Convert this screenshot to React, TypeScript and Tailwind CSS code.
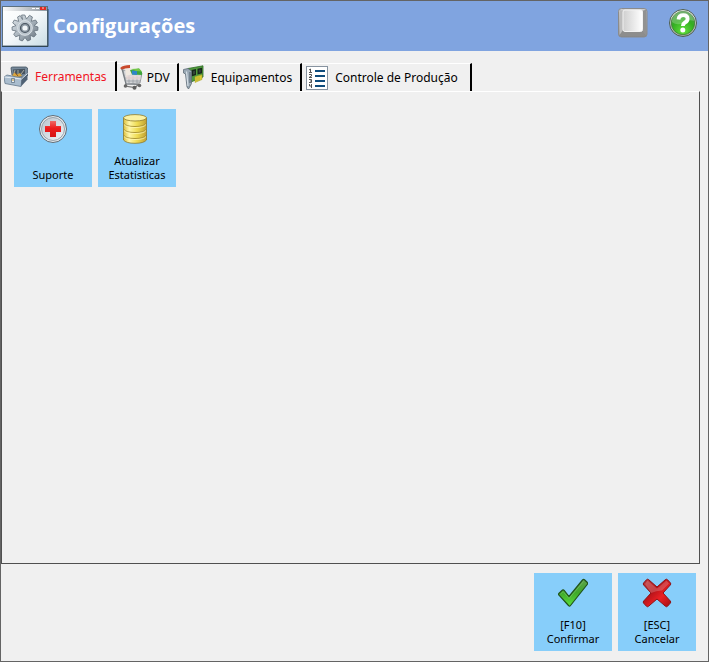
import { useState } from 'react'
import type { ReactNode } from 'react'

function WindowGearIcon() {
  return (
    <svg width="47" height="41" viewBox="0 0 47 41" aria-hidden="true">
      <defs>
        <linearGradient id="winBg" x1="0" y1="0" x2="1" y2="1">
          <stop offset="0" stopColor="#ffffff" />
          <stop offset="0.5" stopColor="#f4f8fa" />
          <stop offset="1" stopColor="#c9dce4" />
        </linearGradient>
        <linearGradient id="winBar" x1="0" y1="0" x2="1" y2="0">
          <stop offset="0" stopColor="#fafafa" />
          <stop offset="1" stopColor="#8d979f" />
        </linearGradient>
        <linearGradient id="gearFill" x1="0" y1="0" x2="1" y2="1">
          <stop offset="0" stopColor="#e2e8ec" />
          <stop offset="0.5" stopColor="#a9b4bd" />
          <stop offset="1" stopColor="#66727d" />
        </linearGradient>
      </defs>
      <rect x="0.5" y="0.5" width="45" height="39.5" fill="url(#winBg)" stroke="#5c6f7d" />
      <path d="M0 40.5h46V3" fill="none" stroke="#2f4655" />
      <rect x="1" y="1" width="44" height="4" fill="url(#winBar)" />
      <rect x="30" y="2" width="3" height="1" fill="#fff" />
      <rect x="34" y="2" width="3" height="1" fill="#fff" />
      <rect x="38" y="1" width="6" height="3" fill="#e02a22" />
      <path d="M40 2h2" stroke="#fff" strokeWidth="0.8" />
      <g transform="translate(23 22)">
        <path
          d="M-2.5-8.5-3.4-13H-.2L1.5-9 4.5-12.7 7.4-11 6.3-6.7 10.6-8 12.4-5.1 9-2.4 13-1 12.8 2.3 8.8 3 11.2 6.5 8.9 9 5.2 7.2 5.6 11.7 2.6 13 0 9.5-2.7 13-5.7 11.7-5.2 7.2-9.3 8.8-11.3 6.2-8.7 3-12.8 2.2-13-1-9-2.4-12.3-5.1-10.7-8-6.3-6.6-7.4-11-4.8-12.4Z"
          fill="url(#gearFill)"
          stroke="#65717c"
          strokeWidth="0.8"
        />
        <circle r="7.3" fill="#b9c3cb" stroke="#dce3e8" strokeWidth="1" />
        <circle r="4.5" fill="#8a96a1" stroke="#4b5660" strokeWidth="1.2" />
        <circle r="2.6" fill="#f2f6f8" />
      </g>
    </svg>
  )
}

function KeyIcon() {
  return (
    <svg width="30" height="30" viewBox="0 0 30 30" aria-hidden="true">
      <defs>
        <linearGradient id="keyTop" x1="0" y1="0" x2="1" y2="0">
          <stop offset="0" stopColor="#cfcfcf" />
          <stop offset="0.6" stopColor="#ececec" />
          <stop offset="1" stopColor="#ffffff" />
        </linearGradient>
        <linearGradient id="keySide" x1="0" y1="0" x2="0" y2="1">
          <stop offset="0" stopColor="#d0d0d0" />
          <stop offset="1" stopColor="#858585" />
        </linearGradient>
      </defs>
      <rect x="0.5" y="0.5" width="28.5" height="28.5" rx="3" fill="url(#keySide)" stroke="#8b8b8b" />
      <path d="M24 3 28.5 1.5V28L24 23Z" fill="#929292" />
      <path d="M4 23h20l4 5H2Z" fill="#8d8d8d" />
      <path d="M1.5 2 5 3V22L1.5 27Z" fill="#bdbdbd" />
      <rect x="5" y="2" width="19.5" height="21.5" rx="2" fill="url(#keyTop)" stroke="#f2f2f2" />
    </svg>
  )
}

function HelpIcon() {
  return (
    <svg width="30" height="30" viewBox="0 0 30 30" aria-hidden="true">
      <defs>
        <linearGradient id="helpRing" x1="0" y1="0" x2="0" y2="1">
          <stop offset="0" stopColor="#e4e9e4" />
          <stop offset="1" stopColor="#a4ada4" />
        </linearGradient>
        <radialGradient id="helpFill" cx="0.5" cy="0.85" r="0.8">
          <stop offset="0" stopColor="#62e13b" />
          <stop offset="0.6" stopColor="#34ae22" />
          <stop offset="1" stopColor="#4b9c45" />
        </radialGradient>
      </defs>
      <circle cx="15" cy="15" r="13.5" fill="url(#helpRing)" stroke="#4c5d50" strokeWidth="1" />
      <circle cx="15" cy="15" r="11.7" fill="url(#helpFill)" stroke="#3d7d35" strokeWidth="0.8" />
      <path d="M4 14a11 11 0 0 1 22-1Q20 11 15 15 9 18 4 14Z" fill="#fff" opacity="0.22" />
      <path d="M10.5 11.5Q11 7.2 15.3 7.2 19.6 7.2 19.6 10.8 19.6 13.2 17 14.5 15 15.6 14.9 18" fill="none" stroke="#fff" strokeWidth="3.8" />
      <circle cx="14.8" cy="22" r="2.5" fill="#fff" />
    </svg>
  )
}

function ToolboxIcon() {
  return (
    <svg width="24" height="22" viewBox="0 0 24 22" aria-hidden="true">
      <path d="M7 2Q7 1 8.5 1L22 1Q24 1.5 24 4V9L21 12 8 9Z" fill="#77899a" stroke="#40505f" strokeWidth="0.8" />
      <path d="M9 3.5 21 2.7V8L10 9Z" fill="#47545f" />
      <path d="M10 8 11 4M14 8V4M17 8 20 4" stroke="#a8a9a2" strokeWidth="1" />
      <path d="M8 9.5 10.5 6.5l2.5 2 3-1.5 2 3-8 1.5Z" fill="#d9a640" />
      <path d="M11 6.5 14 10" stroke="#8d581f" strokeWidth="1" />
      <path d="M0 11 3 9 18 12 17 20.5 1 17.5Z" fill="#aabdce" stroke="#65798c" strokeWidth="0.8" />
      <path d="M17.5 12.5 23.5 7.5V13.5L17 20.5Z" fill="#4f6174" />
      <path d="M0.5 11 17.5 13 23.5 7.5" fill="none" stroke="#e2ebf2" strokeWidth="1" />
      <path d="M7.5 12.5h3v4h-3Z" fill="#e9eff4" stroke="#536778" strokeWidth="0.7" />
      <path d="M9 13v2" stroke="#c49033" />
    </svg>
  )
}

function CartIcon() {
  return (
    <svg width="23" height="25" viewBox="0 0 23 25" aria-hidden="true">
      <path d="M3 5 22 8 20 18 6 19Z" fill="#d3d5d8" stroke="#85898e" strokeWidth="0.8" />
      <path d="M5 4 11 3l2 6-7 2Z" fill="#efe8df" />
      <path d="M10 5 19 3.5 22 7V10L12 9.5Z" fill="#3fa53b" />
      <path d="M12 5.5 17 6V10L12 9.5Z" fill="#2e86c8" />
      <path d="M11 4 19 3.5 22 6.5 16 6Z" fill="#74c648" />
      <path d="M1 4Q4 1.5 10 1.5" fill="none" stroke="#c9492c" strokeWidth="2.8" />
      <path d="M2 4 6 19 19 19.5" fill="none" stroke="#777d82" strokeWidth="1.2" />
      <path d="M5 13 20 13M5.5 16 20 16M9 11V19M13 11V19M17 11V19" stroke="#94989d" strokeWidth="0.7" />
      <path d="M5.5 10.5h15v4h-14Z" fill="#f0dcd9" opacity="0.7" />
      <path d="M6 19 5 21 15 22.5 19 19" fill="none" stroke="#777" strokeWidth="1.2" />
      <circle cx="5.5" cy="21" r="1.8" fill="#666" />
      <circle cx="14.5" cy="22.8" r="2" fill="#5d5d5d" />
      <circle cx="19.5" cy="20.5" r="1.8" fill="#666" />
    </svg>
  )
}

function CardIcon() {
  return (
    <svg width="21" height="25" viewBox="0 0 21 25" aria-hidden="true">
      <path d="M5 3.5 20 0.8V12L8 17Z" fill="#509a3b" stroke="#2f6b27" strokeWidth="0.8" />
      <path d="M8.5 5 13 4V10L8.5 11.5ZM14.5 3.7 19 2.8V8.3L14.5 9.5Z" fill="#17271b" />
      <path d="M10 6.2 12 5.7V9L10 9.6ZM15.8 4.8 17.8 4.4V7.2L15.8 7.8Z" fill="#34433a" />
      <path d="M12 11.8 19 9.8V14.5L12 17.5Z" fill="#d9ce35" stroke="#a59b27" strokeWidth="0.5" />
      <path d="M14 12V16M16 11.5V15.5" stroke="#a59b27" strokeWidth="0.6" />
      <path d="M0.5 4.5 5 3.5 8.5 6V18.5L5.5 24 4 22 2.5 9 0.5 8Z" fill="#98a7b3" stroke="#5d6b76" strokeWidth="0.8" />
      <path d="M3.5 6.5 5 21" stroke="#d5dfe6" strokeWidth="1.2" />
      <path d="M7 7V18" stroke="#667582" strokeWidth="1.4" />
    </svg>
  )
}

function NumberedListIcon() {
  return (
    <svg width="22" height="24" viewBox="0 0 22 24" aria-hidden="true">
      <rect x="0.5" y="0.5" width="21" height="23" fill="#fff" stroke="#8793a0" />
      <path d="M9 4h10v2H9ZM9 9h10v2H9ZM9 14h10v2H9ZM9 19h10v2H9Z" fill="#0f4c7c" />
      <path d="M3 4 4.5 3V6M3 6.5h3M3 8.5h2.5V10L3 11.5h3M3 13.5h2.5v3H3M4 15h1.5M3.5 18v2H6M5.5 18v4" fill="none" stroke="#444" strokeWidth="0.9" />
    </svg>
  )
}

function SupportIcon() {
  return (
    <svg width="30" height="30" viewBox="0 0 30 30" aria-hidden="true">
      <defs>
        <linearGradient id="supFill" x1="0" y1="0" x2="1" y2="1">
          <stop offset="0" stopColor="#b9c4cd" />
          <stop offset="1" stopColor="#f0f4f7" />
        </linearGradient>
        <linearGradient id="supCross" x1="0" y1="0" x2="0" y2="1">
          <stop offset="0" stopColor="#ee6a66" />
          <stop offset="0.45" stopColor="#ed1c1c" />
          <stop offset="1" stopColor="#d51414" />
        </linearGradient>
      </defs>
      <circle cx="15" cy="15" r="13.5" fill="#e6eaed" stroke="#5f6b74" />
      <circle cx="15" cy="15" r="11.5" fill="url(#supFill)" stroke="#98a4ad" />
      <path d="M12 7h6v5h5v6h-5v5h-6v-5H7v-6h5Z" fill="url(#supCross)" />
    </svg>
  )
}

function DatabaseIcon() {
  return (
    <svg width="30" height="30" viewBox="0 0 30 30" aria-hidden="true">
      <defs>
        <linearGradient id="dbFill" x1="0" y1="0" x2="1" y2="0">
          <stop offset="0" stopColor="#dcbf3a" />
          <stop offset="0.25" stopColor="#fff7a8" />
          <stop offset="0.6" stopColor="#eedb52" />
          <stop offset="1" stopColor="#c0a032" />
        </linearGradient>
      </defs>
      <path d="M1.5 3.8V26Q4 29.3 13 29.3T24.5 26V3.8Z" fill="url(#dbFill)" stroke="#8d7a2d" strokeWidth="0.8" />
      <ellipse cx="13" cy="3.8" rx="11.5" ry="3.2" fill="#fbf2a4" stroke="#8d7a2d" strokeWidth="0.8" />
      <path d="M2 9.5Q4 12.5 13 12.5T24 9.5M2 15.5Q4 18.5 13 18.5T24 15.5M2 21.5Q4 24.5 13 24.5T24 21.5" fill="none" stroke="#a38c2f" strokeWidth="0.9" />
      <path d="M2 10.5Q4 13.5 13 13.5T24 10.5M2 16.5Q4 19.5 13 19.5T24 16.5M2 22.5Q4 25.5 13 25.5T24 22.5" fill="none" stroke="#fff6b0" strokeWidth="0.8" />
    </svg>
  )
}

function CheckIcon() {
  return (
    <svg width="30" height="30" viewBox="0 0 30 30" aria-hidden="true">
      <defs>
        <linearGradient id="checkFill" x1="0" y1="0" x2="0" y2="1">
          <stop offset="0" stopColor="#5da04b" />
          <stop offset="0.5" stopColor="#3fa92b" />
          <stop offset="1" stopColor="#5be03b" />
        </linearGradient>
      </defs>
      <path d="M0.8 15.5 4.5 12Q5.5 11.5 6.3 12.5L11 18.5 24.5 2Q25.5 1 26.5 1.8L29.3 4.5Q30 5.5 29.2 6.5L12.5 27.5Q11.5 28.8 10.5 27.5L1 17.2Q0.2 16.3 0.8 15.5Z" fill="url(#checkFill)" stroke="#20521b" strokeWidth="1.2" />
      <path d="M2.5 16 5.2 13.7 11 20.5 25.5 3.5" fill="none" stroke="#8ccb7a" strokeWidth="0.8" opacity="0.6" />
    </svg>
  )
}

function CrossIcon() {
  return (
    <svg width="30" height="30" viewBox="0 0 30 30" aria-hidden="true">
      <defs>
        <linearGradient id="crossFill" x1="0" y1="0" x2="1" y2="1">
          <stop offset="0" stopColor="#b8383b" />
          <stop offset="0.4" stopColor="#b8141a" />
          <stop offset="0.65" stopColor="#ec2024" />
          <stop offset="1" stopColor="#a00d12" />
        </linearGradient>
      </defs>
      <path d="M6.5 1.5 15 9 23.5 1.5Q24.5 0.8 25.5 1.7L28.5 5Q29.2 6 28.3 7L21 15 28.3 23Q29.2 24 28.4 25L25.5 28.3Q24.5 29.2 23.5 28.3L15 21 6.5 28.3Q5.5 29.2 4.5 28.3L1.5 25Q0.8 24 1.7 23L9 15 1.7 7Q0.8 6 1.6 5L4.5 1.7Q5.5 0.8 6.5 1.5Z" fill="url(#crossFill)" stroke="#8e1216" strokeWidth="1" />
      <path d="M5.5 2.5 15 10.5 24.5 2.5 27 5.5 20 12.5Q14 12.5 9 15L3 6Z" fill="#fff" opacity="0.2" />
    </svg>
  )
}

const tabs = [
  { label: 'Ferramentas', icon: <ToolboxIcon />, layout: 'gap-[7px] pl-[3px] pr-2' },
  { label: 'PDV', icon: <CartIcon />, layout: 'gap-1 pl-[3px] pr-[7px]' },
  { label: 'Equipamentos', icon: <CardIcon />, layout: 'gap-[7px] pl-1 pr-2' },
  { label: 'Controle de Produção', icon: <NumberedListIcon />, layout: 'gap-[7px] pl-1 pr-3' },
]

function TileButton({ icon, lines }: { icon: ReactNode; lines: string[] }) {
  return (
    <button
      type="button"
      className="flex size-[78px] flex-col items-center justify-between bg-[#87cefa] pt-[5px] pb-[5px] text-[11px] leading-[14px] text-black"
    >
      {icon}
      <span className="flex flex-col whitespace-nowrap">
        {lines.map((line) => (
          <span key={line}>{line}</span>
        ))}
      </span>
    </button>
  )
}

export default function App() {
  const [active, setActive] = useState(0)

  return (
    <div className="flex min-h-screen flex-col border border-[#646464] bg-[#f0f0f0] font-['Noto_Sans',sans-serif]">
      <header className="flex h-[50px] items-center justify-between bg-[#80a4e0] pr-[10px] pl-px">
        <div className="flex items-center gap-1">
          <WindowGearIcon />
          <h1 className="font-['Open_Sans',sans-serif] text-[20px] font-bold text-white">Configurações</h1>
        </div>
        <div className="flex gap-5 pb-[6px]">
          <button type="button" aria-label="Teclado">
            <KeyIcon />
          </button>
          <button type="button" aria-label="Ajuda">
            <HelpIcon />
          </button>
        </div>
      </header>

      <main className="flex flex-1 flex-col pt-[10px] pr-2">
        <div role="tablist" className="flex h-[30px] items-end">
          {tabs.map((tab, i) => (
            <button
              key={tab.label}
              type="button"
              role="tab"
              aria-selected={active === i}
              onClick={() => setActive(i)}
              className={`flex items-center border-t border-r-2 border-t-white border-r-black text-[12px] whitespace-nowrap ${tab.layout} ${
                active === i ? 'h-[30px] text-[#f01424]' : 'h-7 text-black'
              }`}
            >
              {tab.icon}
              {tab.label}
            </button>
          ))}
        </div>
        <section role="tabpanel" className="flex flex-1 items-start gap-[6px] border border-[#505050] border-t-white pt-[17px] pl-3">
          <TileButton icon={<SupportIcon />} lines={['Suporte']} />
          <TileButton icon={<DatabaseIcon />} lines={['Atualizar', 'Estatisticas']} />
        </section>
      </main>

      <footer className="flex justify-end gap-[6px] pt-[9px] pr-3 pb-[10px]">
        <TileButton icon={<CheckIcon />} lines={['[F10]', 'Confirmar']} />
        <TileButton icon={<CrossIcon />} lines={['[ESC]', 'Cancelar']} />
      </footer>
    </div>
  )
}
